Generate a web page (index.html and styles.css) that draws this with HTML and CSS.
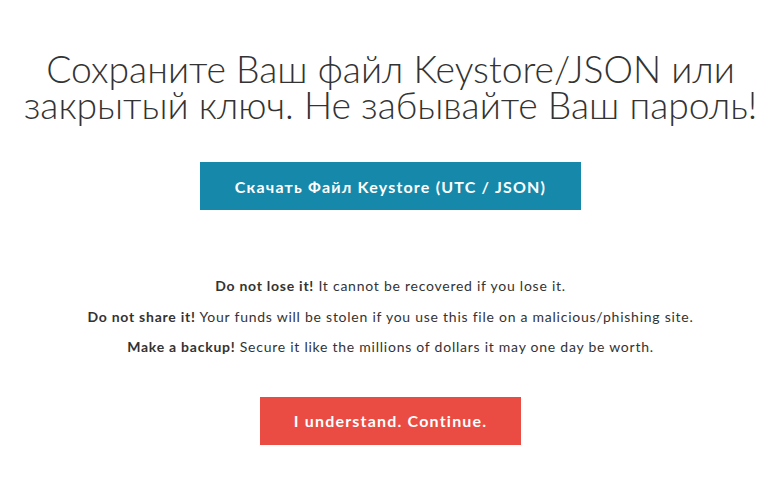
FILE: index.html
```html
<!DOCTYPE html>
<html>
<head>
<meta charset="utf-8">
<link rel="stylesheet" href="styles.css">
</head>
<body>
<main class="page">
  <h1 class="title">Сохраните Ваш файл Keystore/JSON или закрытый ключ. Не забывайте Ваш пароль!</h1>
  <a class="btn btn-blue">Скачать Файл Keystore (UTC / JSON)</a>
  <div class="notes">
    <p><strong>Do not lose it!</strong> It cannot be recovered if you lose it.</p>
    <p><strong>Do not share it!</strong> Your funds will be stolen if you use this file on a malicious/phishing site.</p>
    <p><strong>Make a backup!</strong> Secure it like the millions of dollars it may one day be worth.</p>
  </div>
  <a class="btn btn-red">I understand. Continue.</a>
</main>
</body>
</html>
```

FILE: styles.css
```css
html, body {
  margin: 0;
  padding: 0;
  background: #fff;
}
body {
  font-family: Lato, "Open Sans", sans-serif;
  color: #333;
}
.page {
  display: flex;
  flex-direction: column;
  align-items: center;
  padding: 0 10px 0 7px;
}
.title {
  margin: 51px 0 0;
  font-weight: 300;
  font-size: 37.3px;
  line-height: 36px;
  text-align: center;
  color: #333;
}
.btn {
  display: flex;
  align-items: center;
  justify-content: center;
  height: 48px;
  color: #fff;
  font-weight: 700;
  font-size: 16px;
  letter-spacing: 1.2px;
}
.btn-blue {
  margin-top: 39px;
  width: 381px;
  background: #1689ab;
}
.btn-red {
  margin-top: 29px;
  width: 261px;
  background: #ea4b43;
}
.notes {
  margin-top: 66px;
  text-align: center;
  font-size: 14px;
  line-height: 20px;
  letter-spacing: 0.75px;
}
.notes p {
  margin: 0 0 10.5px;
}
.notes strong {
  font-weight: 700;
}
```
